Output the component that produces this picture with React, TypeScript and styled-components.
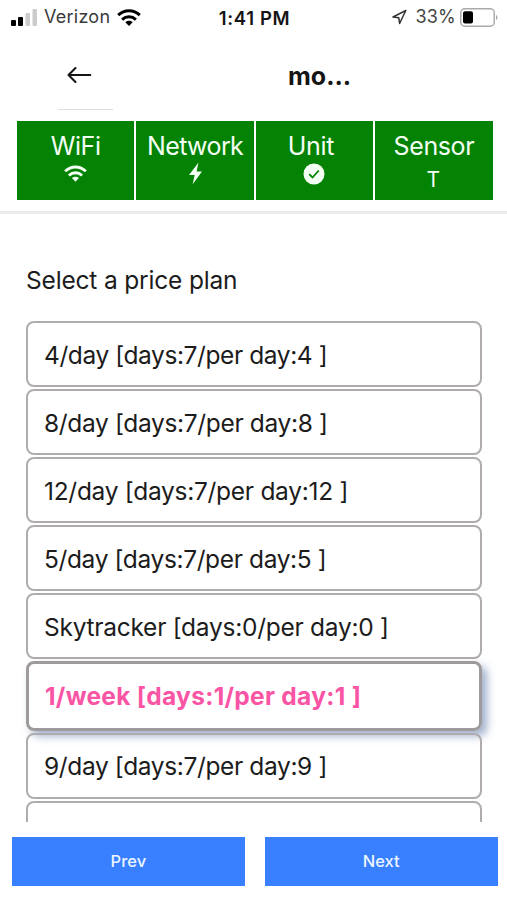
import React from 'react';
import styled, { createGlobalStyle, css } from 'styled-components';

const GlobalStyle = createGlobalStyle`
  * { box-sizing: border-box; }
  body {
    margin: 0;
    background: #fff;
    color: #1c1c1c;
    font-family: Inter, "Liberation Sans", sans-serif;
    overflow: hidden;
  }
`;

const Screen = styled.main`
  width: 507px;
  height: 900px;
  display: flex;
  flex-direction: column;
  overflow: hidden;
`;

const StatusBar = styled.header`
  height: 36px;
  flex: none;
  display: grid;
  grid-template-columns: 1fr auto 1fr;
  align-items: center;
  padding: 0 9px 2px 11px;
  line-height: 22px;
`;

const Carrier = styled.div`
  display: flex;
  align-items: center;
  font-size: 18px;
  letter-spacing: 0.25px;
  color: #3a3a3a;
  svg:first-child { margin-right: 6px; }
  svg:last-child { margin-left: 7px; color: #000; }
`;

const Clock = styled.time`
  font-size: 18.5px;
  font-weight: 600;
  letter-spacing: 0.65px;
  padding-top: 1px;
  color: #151515;
`;

const Power = styled.div`
  display: flex;
  align-items: center;
  justify-content: flex-end;
  font-size: 18px;
  letter-spacing: 0.2px;
  color: #444;
  svg:first-child { margin-right: 8px; }
  svg:last-child { margin-left: 4px; }
`;

const TitleBar = styled.nav`
  height: 75px;
  flex: none;
  display: flex;
  padding-left: 58px;
`;

const BackButton = styled.button`
  width: 55px;
  height: 74px;
  padding: 5px 0 0 9px;
  border: 0;
  border-bottom: 1.5px solid #dededf;
  background: none;
  display: flex;
  align-items: center;
  justify-content: flex-start;
`;

const Title = styled.h1`
  margin: 0 0 0 175px;
  font-size: 25px;
  line-height: 80px;
  font-weight: 650;
  letter-spacing: 0;
  color: #151515;
`;

const StatusPanel = styled.section`
  height: 103px;
  flex: none;
  padding: 10px 14px 0 17px;
  border-bottom: 3px solid #ebebeb;
  display: grid;
  grid-template-columns: repeat(4, 117.4px);
  column-gap: 2px;
`;

const StatusCell = styled.div`
  height: 79px;
  background: #048204;
  color: #f4fff4;
  display: flex;
  flex-direction: column;
  align-items: center;
  svg { display: block; }
`;

const CellLabel = styled.span<{ $tracking: number; $shift?: number }>`
  height: 41px;
  padding-top: 10px;
  margin-right: ${p => p.$shift ?? 0}px;
  font-size: 25px;
  line-height: 30px;
  letter-spacing: ${p => p.$tracking}px;
`;

const CellValue = styled.span`
  padding-top: 8px;
  margin-right: 1px;
  font-size: 21px;
  line-height: 20px;
`;

const Content = styled.section`
  flex: 1;
  min-height: 0;
  padding: 49px 25.5px 0 26px;
  overflow: hidden;
`;

const Heading = styled.h2`
  margin: 0;
  height: 58px;
  font-size: 24.5px;
  line-height: 34px;
  font-weight: 400;
  letter-spacing: -0.17px;
  white-space: nowrap;
`;

const PlanList = styled.div`
  display: flex;
  flex-direction: column;
  gap: 2px;
`;

const PlanOption = styled.button<{ $selected: boolean; $tracking: number }>`
  flex: none;
  height: 66px;
  padding: 1px 0 0 16px;
  border: 2px solid #b0acad;
  border-radius: 8px;
  background: transparent;
  color: #1c1c1c;
  font: 400 24.5px/30px Inter, "Liberation Sans", sans-serif;
  letter-spacing: ${p => p.$tracking}px;
  text-align: left;
  white-space: nowrap;
  ${p => p.$selected && css`
    height: 69.5px;
    border: 3px solid #9f9b9c;
    color: #fa55a5;
    font-weight: 700;
    box-shadow: 5px 5px 9px rgba(70, 100, 155, 0.5);
  `}
`;

const Footer = styled.footer`
  height: 78px;
  flex: none;
  padding: 15px 9.5px 0 12px;
  display: grid;
  grid-template-columns: 1fr 1fr;
  gap: 20px;
`;

const NavButton = styled.button`
  height: 48.5px;
  border: 0;
  padding: 0;
  background: #3880ff;
  color: #edf6ff;
  font: 500 16.5px/20px Inter, "Liberation Sans", sans-serif;
`;

const WifiIcon = ({ width, height }: { width: number; height: number }) => (
  <svg width={width} height={height} viewBox="0 0 24 17" fill="none" stroke="currentColor" strokeWidth="3">
    <path d="M1.2 6.2C7.4.2 16.6.2 22.8 6.2" />
    <path d="M5.1 10.6c4.1-3.8 9.7-3.8 13.8 0" />
    <path d="M8.3 13.2c2.2-1.9 5.2-1.9 7.4 0L12 17z" fill="currentColor" stroke="none" />
  </svg>
);

const SignalIcon = () => (
  <svg width="27" height="17" viewBox="0 0 27 17">
    <rect x="0" y="11" width="5" height="6" rx="1" fill="#000" />
    <rect x="7" y="8" width="5" height="9" rx="1" fill="#000" />
    <rect x="14.5" y="4" width="4.5" height="13" rx="1" fill="#ccc" />
    <rect x="21.5" y="0" width="4.5" height="17" rx="1" fill="#ccc" />
  </svg>
);

const LocationIcon = () => (
  <svg width="15" height="16" viewBox="0 0 15 16" fill="none" stroke="#333" strokeWidth="1.5" strokeLinejoin="round">
    <path d="M13.8 1.5 1 8l5.8.8.8 5.7z" />
  </svg>
);

const BatteryIcon = () => (
  <svg width="38" height="19" viewBox="0 0 38 19">
    <rect x=".75" y=".75" width="33.5" height="17.5" rx="4" fill="none" stroke="#aaa" strokeWidth="1.5" />
    <rect x="3" y="3.3" width="10" height="12.2" rx="2" fill="#000" />
    <path d="M36 7c2 .8 2 4.2 0 5z" fill="#aaa" />
  </svg>
);

const BackIcon = () => (
  <svg width="25" height="18" viewBox="0 0 25 18" fill="none" stroke="#151515" strokeWidth="2.1" strokeLinecap="round" strokeLinejoin="round">
    <path d="M8.5 2 1.5 9l7 7M1.5 9h21.8" />
  </svg>
);

const BoltIcon = () => (
  <svg width="15" height="23" viewBox="0 0 15 23" fill="currentColor">
    <path d="M10.5.5 1 12.9h5.6L4.7 22.3 14 9.4H8.6z" />
  </svg>
);

const CheckIcon = () => (
  <svg width="22" height="22" viewBox="0 0 22 22">
    <circle cx="11" cy="11" r="10.5" fill="currentColor" />
    <path d="m6.2 11.2 3.3 3.3 6.3-7" fill="none" stroke="#048204" strokeWidth="1.8" />
  </svg>
);

const IconSlot = styled.div<{ $top: number; $left: number }>`
  margin: ${p => p.$top}px 0 0 ${p => p.$left}px;
`;

const plans = [
  { label: '4/day [days:7/per day:4 ]', tracking: -0.41 },
  { label: '8/day [days:7/per day:8 ]', tracking: -0.34 },
  { label: '12/day [days:7/per day:12 ]', tracking: -0.28 },
  { label: '5/day [days:7/per day:5 ]', tracking: -0.37 },
  { label: 'Skytracker [days:0/per day:0 ]', tracking: -0.26 },
  { label: '1/week [days:1/per day:1 ]', tracking: 0.3, selected: true },
  { label: '9/day [days:7/per day:9 ]', tracking: -0.37 },
  { label: '', tracking: 0 },
];

export default function App() {
  return (
    <Screen>
      <GlobalStyle />
      <StatusBar>
        <Carrier><SignalIcon />Verizon<WifiIcon width={24} height={17} /></Carrier>
        <Clock>1:41 PM</Clock>
        <Power><LocationIcon />33%<BatteryIcon /></Power>
      </StatusBar>
      <TitleBar>
        <BackButton aria-label="Back"><BackIcon /></BackButton>
        <Title>mo...</Title>
      </TitleBar>
      <StatusPanel>
        <StatusCell>
          <CellLabel $tracking={-0.4}>WiFi</CellLabel>
          <IconSlot $top={3} $left={-1}><WifiIcon width={23} height={17} /></IconSlot>
        </StatusCell>
        <StatusCell>
          <CellLabel $tracking={-0.6}>Network</CellLabel>
          <IconSlot $top={0} $left={1}><BoltIcon /></IconSlot>
        </StatusCell>
        <StatusCell>
          <CellLabel $tracking={-0.3} $shift={7}>Unit</CellLabel>
          <IconSlot $top={1} $left={0}><CheckIcon /></IconSlot>
        </StatusCell>
        <StatusCell>
          <CellLabel $tracking={-0.4}>Sensor</CellLabel>
          <CellValue>T</CellValue>
        </StatusCell>
      </StatusPanel>
      <Content>
        <Heading>Select a price plan</Heading>
        <PlanList>
          {plans.map((plan, i) => (
            <PlanOption key={i} $selected={!!plan.selected} $tracking={plan.tracking}>{plan.label}</PlanOption>
          ))}
        </PlanList>
      </Content>
      <Footer>
        <NavButton>Prev</NavButton>
        <NavButton>Next</NavButton>
      </Footer>
    </Screen>
  );
}
